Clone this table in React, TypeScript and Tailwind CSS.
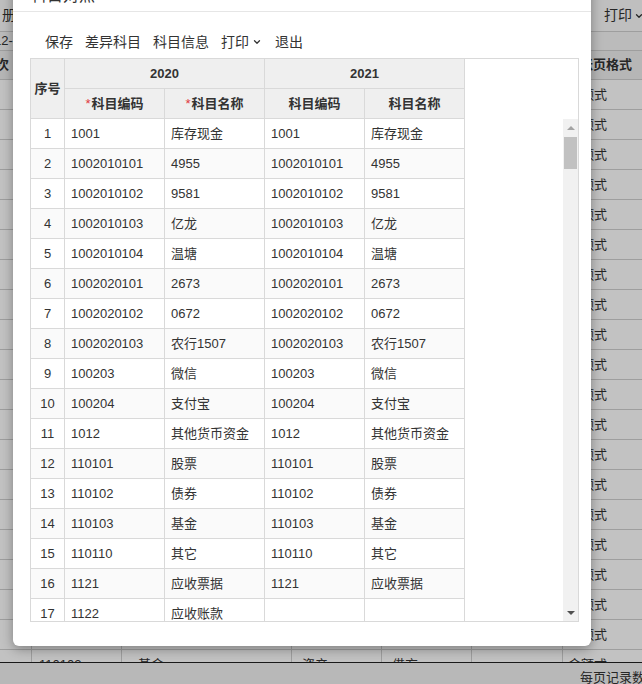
import { ChevronDown, X } from "lucide-react";

const rows = [
  ["1001", "库存现金", "1001", "库存现金"],
  ["1002010101", "4955", "1002010101", "4955"],
  ["1002010102", "9581", "1002010102", "9581"],
  ["1002010103", "亿龙", "1002010103", "亿龙"],
  ["1002010104", "温塘", "1002010104", "温塘"],
  ["1002020101", "2673", "1002020101", "2673"],
  ["1002020102", "0672", "1002020102", "0672"],
  ["1002020103", "农行1507", "1002020103", "农行1507"],
  ["100203", "微信", "100203", "微信"],
  ["100204", "支付宝", "100204", "支付宝"],
  ["1012", "其他货币资金", "1012", "其他货币资金"],
  ["110101", "股票", "110101", "股票"],
  ["110102", "债券", "110102", "债券"],
  ["110103", "基金", "110103", "基金"],
  ["110110", "其它", "110110", "其它"],
  ["1121", "应收票据", "1121", "应收票据"],
  ["1122", "应收账款", "", ""],
];

// rows of the page behind the dialog; only the last one shows below it
const bgRows = Array.from({ length: 20 }, (_, i) =>
  i === 19 ? ["110102", "基金", "资产", "借方"] : ["", "", "", ""]
);

const toolbar = ["保存", "差异科目", "科目信息"];

export default function App() {
  return (
    <div className="relative w-[642px] h-[684px] overflow-hidden bg-white font-['Liberation_Sans','Noto_Sans_CJK_SC',sans-serif] text-[13px] text-[#333]">
      {/* Page behind the dialog */}
      <div className="flex flex-col h-full">
        <div className="h-[32px] shrink-0 flex items-center justify-between border-b border-[#d0d0d0] bg-[#fbfbfb] text-[14px]">
          <span className="ml-[2px]">册</span>
          <span className="flex items-center gap-[2px] mr-[-2px]">
            打印
            <ChevronDown className="w-[10px] h-[10px]" strokeWidth={3} />
          </span>
        </div>
        <div className="h-[18px] shrink-0 flex items-center bg-[#f6f6f6]">
          <span className="ml-[-6px]">12-31</span>
        </div>
        <div className="h-[30px] shrink-0 flex border-y border-[#d0d0d0] bg-[#efefef] font-bold">
          <div className="w-[32px] flex items-center border-r border-[#d0d0d0]">
            <span className="ml-[-17px] whitespace-nowrap">级次</span>
          </div>
          <div className="w-[90px] border-r border-[#d0d0d0]" />
          <div className="w-[170px] border-r border-[#d0d0d0]" />
          <div className="w-[90px] border-r border-[#d0d0d0]" />
          <div className="w-[90px] border-r border-[#d0d0d0]" />
          <div className="w-[91px] border-r border-[#d0d0d0]" />
          <div className="flex-1 flex items-center pl-[17px] whitespace-nowrap">账页格式</div>
        </div>
        <div className="flex-1 overflow-hidden">
          {bgRows.map((r, i) => (
            <div key={i} className="h-[30px] flex border-b border-[#d0d0d0]">
              <div className="w-[32px] border-r border-[#d0d0d0]" />
              <div className="w-[90px] border-r border-[#d0d0d0] flex items-center pl-[7px]">{r[0]}</div>
              <div className="w-[170px] border-r border-[#d0d0d0] flex items-center pl-[16px]">{r[1]}</div>
              <div className="w-[90px] border-r border-[#d0d0d0] flex items-center pl-[10px]">{r[2]}</div>
              <div className="w-[90px] border-r border-[#d0d0d0] flex items-center pl-[10px]">{r[3]}</div>
              <div className="w-[91px] border-r border-[#d0d0d0]" />
              <div className="flex-1 flex items-center pl-[5px] whitespace-nowrap">金额式</div>
            </div>
          ))}
        </div>
        <div className="h-[22px] shrink-0 border-t border-[#222] bg-[#f2f2f2] pt-[7px]">
          <span className="ml-[580px] block whitespace-nowrap leading-[16px]">每页记录数</span>
        </div>
      </div>

      {/* Mask */}
      <div className="absolute inset-0 bg-black/[0.24]" />

      {/* Dialog */}
      <div className="absolute left-[13px] top-[-20px] w-[578px] h-[666px] rounded-[6px] bg-white shadow-[0_3px_12px_rgba(0,0,0,0.35)]">
        <div className="h-[32px] flex items-center justify-between px-[18px] border-b border-[#e6e6e6]">
          <span className="text-[16px] text-[#333]">科目对照</span>
          <X className="w-[15px] h-[15px] mr-[25px] text-[#999]" strokeWidth={2} />
        </div>

        <div className="px-[17px] pt-[19px]">
          <div className="h-[22px] flex items-center pl-[9px] text-[14px] text-[#333]">
            {toolbar.map((t) => (
              <span key={t} className="px-[6px]">
                {t}
              </span>
            ))}
            <span className="px-[6px] flex items-center gap-[3px]">
              打印
              <ChevronDown className="w-[10px] h-[10px]" strokeWidth={3} />
            </span>
            <span className="px-[7px]">退出</span>
          </div>

          <div className="mt-[5px] w-[549px] h-[564px] border border-[#d9d9d9] flex flex-col overflow-hidden">
            {/* header */}
            <div className="h-[60px] shrink-0 flex">
              <div className="flex bg-[#efefef] font-bold text-[#333]">
                <div className="w-[34px] h-[60px] border-r border-b border-[#d9d9d9] flex items-center justify-center">
                  序号
                </div>
                {["2020", "2021"].map((y) => (
                  <div key={y} className="flex flex-col">
                    <div className="w-[200px] h-[30px] border-r border-b border-[#d9d9d9] flex items-center justify-center">
                      {y}
                    </div>
                    <div className="flex">
                      <div className="w-[100px] h-[30px] border-r border-b border-[#d9d9d9] flex items-center justify-center">
                        {y === "2020" && <span className="text-[#e0383e] font-normal mr-[1px]">*</span>}
                        科目编码
                      </div>
                      <div className="w-[100px] h-[30px] border-r border-b border-[#d9d9d9] flex items-center justify-center">
                        {y === "2020" && <span className="text-[#e0383e] font-normal mr-[1px]">*</span>}
                        科目名称
                      </div>
                    </div>
                  </div>
                ))}
              </div>
              <div className="flex-1 bg-white" />
            </div>

            {/* body */}
            <div className="flex-1 flex overflow-hidden">
              <div className="w-[434px] shrink-0">
                {rows.map((r, i) => (
                  <div
                    key={i}
                    className={`h-[30px] flex border-b border-[#d9d9d9] ${i % 2 === 1 ? "bg-[#fafafa]" : "bg-white"}`}
                  >
                    <div className="w-[34px] border-r border-[#d9d9d9] flex items-center justify-center">{i + 1}</div>
                    {r.map((c, j) => (
                      <div key={j} className="w-[100px] border-r border-[#d9d9d9] flex items-center pl-[6px] whitespace-nowrap">
                        {c}
                      </div>
                    ))}
                  </div>
                ))}
              </div>
              <div className="flex-1" />
              <div className="w-[15px] shrink-0 bg-[#f1f1f1] flex flex-col items-center">
                <div className="h-[17px] flex items-center justify-center">
                  <div className="w-0 h-0 border-x-[4px] border-x-transparent border-b-[4px] border-b-[#a3a3a3]" />
                </div>
                <div className="mt-[1px] w-[13px] h-[32px] bg-[#c1c1c1]" />
                <div className="flex-1" />
                <div className="h-[17px] flex items-center justify-center">
                  <div className="w-0 h-0 border-x-[4px] border-x-transparent border-t-[4px] border-t-[#505050]" />
                </div>
              </div>
            </div>
          </div>
        </div>
      </div>
    </div>
  );
}
